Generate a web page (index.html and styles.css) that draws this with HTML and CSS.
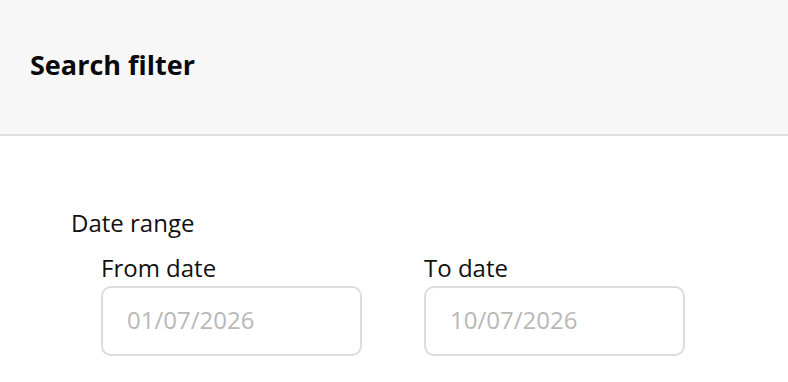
FILE: index.html
```html
<!DOCTYPE html>
<html>
<head>
<meta charset="utf-8">
<link rel="stylesheet" href="styles.css">
</head>
<body>
<header class="header">
  <h1 class="title">Search filter</h1>
</header>
<main class="content">
  <div class="group-label">Date range</div>
  <div class="fields">
    <div class="field">
      <label class="field-label">From date</label>
      <div class="input"><span class="placeholder">01/07/2026</span></div>
    </div>
    <div class="field">
      <label class="field-label">To date</label>
      <div class="input"><span class="placeholder">10/07/2026</span></div>
    </div>
  </div>
</main>
</body>
</html>
```
FILE: styles.css
```css
* { box-sizing: border-box; }
html, body { margin: 0; padding: 0; background: #fff; }
body { font-family: "Open Sans", sans-serif; color: #111; }
.header {
  height: 136px;
  background: #f7f7f7;
  border-bottom: 2px solid #e1e1e1;
  display: flex;
  align-items: center;
  padding: 0 30px 4px;
}
.title {
  margin: 0;
  font-size: 27px;
  line-height: 36px;
  font-weight: 700;
  color: #0a0a0a;
}
.content {
  padding: 71px 0 0 71px;
}
.group-label {
  font-size: 24px;
  line-height: 32px;
}
.fields {
  display: flex;
  gap: 62px;
  padding-left: 30px;
  margin-top: 13px;
}
.field {
  display: flex;
  flex-direction: column;
  width: 261px;
}
.field-label {
  font-size: 24px;
  line-height: 32px;
  margin-bottom: 2px;
}
.input {
  height: 70px;
  border: 2px solid #dcdcdc;
  border-radius: 10px;
  display: flex;
  align-items: center;
  padding: 0 0 3px 24px;
}
.placeholder {
  font-size: 24px;
  color: #b8b8b8;
}
```
